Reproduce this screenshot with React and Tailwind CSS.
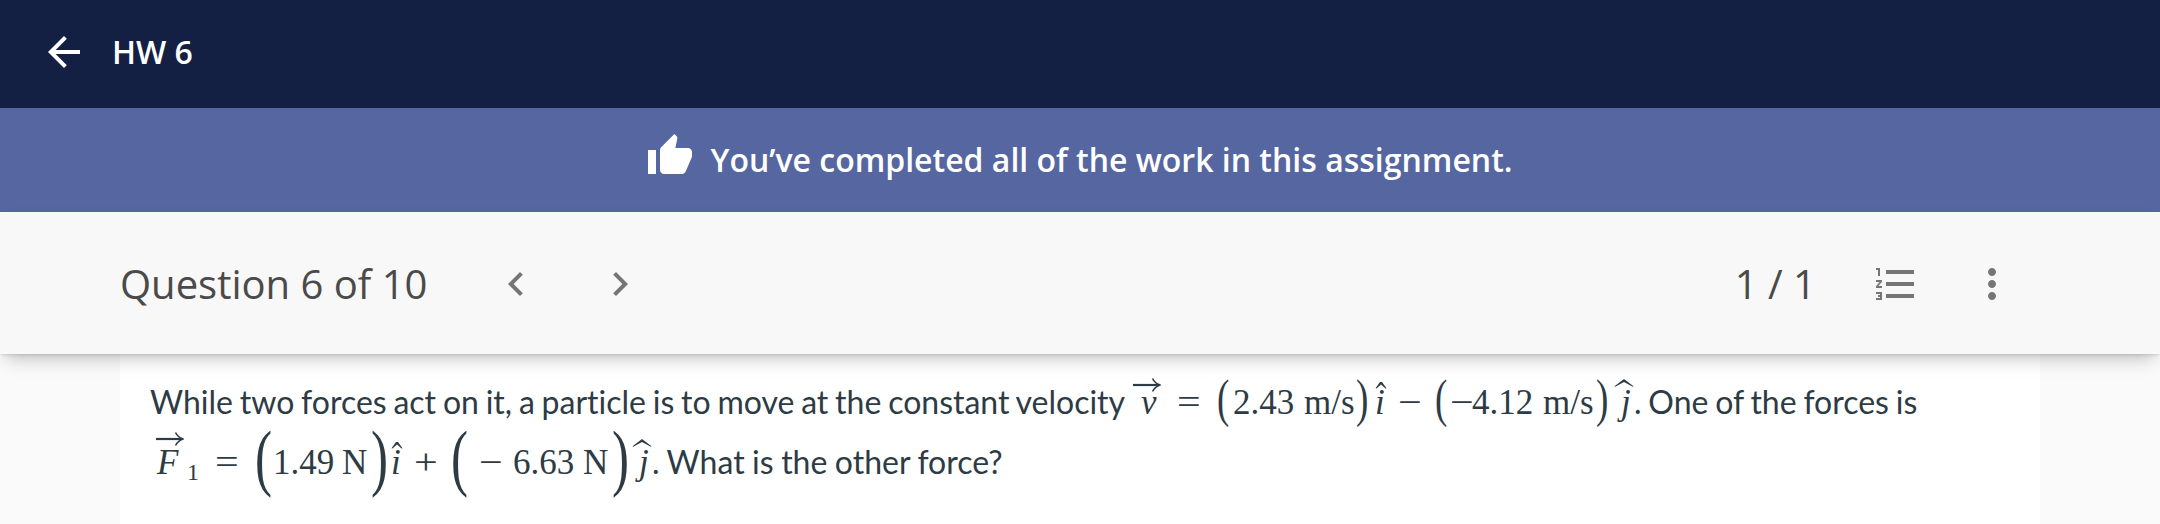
function Icon({ path, className }) {
    return (
        <svg viewBox="0 0 24 24" className={`block h-12 w-12 shrink-0 fill-current ${className || ''}`}>
            <path d={path} />
        </svg>
    );
}

const ICONS = {
    back: 'M20 11H7.83l5.59-5.59L12 4l-8 8 8 8 1.41-1.41L7.83 13H20v-2z',
    thumb: 'M1 21h4V9H1v12zm22-11c0-1.1-.9-2-2-2h-6.31l.95-4.57.03-.32c0-.41-.17-.79-.44-1.06L14.17 1 7.59 7.59C7.22 7.95 7 8.45 7 9v10c0 1.1.9 2 2 2h9c.83 0 1.54-.5 1.84-1.22l3.02-7.05c.09-.23.14-.47.14-.73v-2z',
    prev: 'M15.41 7.41L14 6l-6 6 6 6 1.41-1.41L10.83 12z',
    next: 'M10 6L8.59 7.41 13.17 12l-4.58 4.59L10 18l6-6z',
    list: 'M2 17h2v.5H3v1h1v.5H2v1h3v-4H2v1zm1-9h1V4H2v1h1v3zm-1 3h1.8L2 13.1v.9h3v-1H3.2L5 10.9V10H2v1zm5-6v2h14V5H7zm0 14h14v-2H7v2zm0-6h14v-2H7v2z',
    more: 'M12 8c1.1 0 2-.9 2-2s-.9-2-2-2-2 .9-2 2 .9 2 2 2zm0 2c-1.1 0-2 .9-2 2s.9 2 2 2 2-.9 2-2-.9-2-2-2zm0 6c-1.1 0-2 .9-2 2s.9 2 2 2 2-.9 2-2-.9-2-2-2z',
};

// One token of a formula. The width class carries the space after it.
function M({ className, children }) {
    return (
        <span className={`relative shrink-0 whitespace-pre font-['Liberation_Serif',serif] text-[35px] leading-[60px] ${className}`}>
            {children}
        </span>
    );
}

function Op({ className, children }) {
    return (
        <M className={className}>
            <span className="inline-block origin-[0_50%] scale-x-[1.2]">{children}</span>
        </M>
    );
}

function Fence({ className, big, children }) {
    return (
        <M className={className}>
            <span
                className={
                    big
                        ? 'relative top-[8px] inline-block origin-left scale-x-[0.7] text-[73px] leading-[20px]'
                        : 'relative top-[2px] left-[1px] inline-block origin-left scale-x-[0.7] text-[53px] leading-[20px]'
                }
            >
                {children}
            </span>
        </M>
    );
}

function Vec({ className }) {
    return (
        <svg viewBox="0 0 28 14" className={`absolute h-[14px] w-7 fill-none stroke-current ${className}`}>
            <path d="M0 7h26" strokeWidth="2.2" />
            <path d="M19.5 .5c1.5 3 4 5.500 8 6.500c-4 1-6.500 3.500-8 6.500" strokeWidth="1.6" />
        </svg>
    );
}

function Hat({ wide, className }) {
    return wide ? (
        <svg viewBox="0 0 20 8" className={`absolute h-2 w-5 fill-current ${className}`}>
            <path d="M.5 7.200L10 0l9.500 7.200-.7.600L10 3 1.200 7.800z" />
        </svg>
    ) : (
        <svg viewBox="0 0 12 7" className={`absolute h-[7px] w-3 fill-current ${className}`}>
            <path d="M.5 6.200L5 0h2l4.500 6.200-1 .4L6 2.600 1.500 6.600z" />
        </svg>
    );
}

export default function App() {
    return (
        <div className="flex h-[524px] w-[2160px] flex-col overflow-hidden bg-[#fafafa] font-['Open_Sans',sans-serif]">
            <header className="flex h-[108px] shrink-0 items-center gap-6 bg-[#141f44] pb-1 pl-10 text-white">
                <Icon path={ICONS.back} />
                <h1 className="text-[32px] leading-[44px] font-semibold">HW 6</h1>
            </header>

            <div className="flex h-[104px] shrink-0 items-center justify-center bg-[#5566a0] pr-px text-white">
                <Icon path={ICONS.thumb} className="mr-4 mb-2" />
                <p className="text-[32px] leading-[44px] font-semibold">You’ve completed all of the work in this assignment.</p>
            </div>

            <div className="relative z-10 flex h-[142px] shrink-0 items-center bg-[#f8f8f8] pt-0.5 pr-36 pl-[120px] text-[#757575] shadow-[0_2px_3px_-1px_rgba(0,0,0,0.12),0_9px_18px_-6px_rgba(0,0,0,0.27)]">
                <h2 className="w-[372px] text-[40px] leading-[54px] text-[#4a4a4a]">Question 6 of 10</h2>
                <Icon path={ICONS.prev} />
                <Icon path={ICONS.next} className="ml-14" />
                <span className="ml-auto text-[40px] leading-[54px] text-[#4a4a4a]">1 / 1</span>
                <Icon path={ICONS.list} className="ml-14" />
                <Icon path={ICONS.more} className="ml-12" />
            </div>

            <main className="mx-[120px] flex-1 bg-white pt-[18px] pl-[30px] font-['Lato',sans-serif] text-[32px] leading-[60px] [word-spacing:-1.4px] text-[#2d3b45] [font-variant-ligatures:none]">
                <div className="flex h-[60px] items-baseline whitespace-pre">
                    <span className="w-[983px]">While two forces act on it, a particle is to move at the constant velocity</span>
                    <M className="w-[44px] pl-[8px] italic">
                        v
                        <Vec className="top-[5px] left-0" />
                    </M>
                    <Op className="w-[39px]">=</Op>
                    <Fence className="w-[17px]">(</Fence>
                    <M className="w-[71px]">2.43</M>
                    <M className="w-[51px]">m/s</M>
                    <Fence className="w-[20px]">)</Fence>
                    <M className="w-[23px] italic">
                        i
                        <Hat className="top-[9px] left-0" />
                    </M>
                    <Op className="w-[36px]">−</Op>
                    <Fence className="w-[16px]">(</Fence>
                    <Op className="w-[22px]">−</Op>
                    <M className="w-[71px]">4.12</M>
                    <M className="w-[52px]">m/s</M>
                    <Fence className="w-[23px]">)</Fence>
                    <M className="w-[16px] pl-[3px] italic">
                        j
                        <Hat wide className="top-[6px] left-[-4px]" />
                    </M>
                    <span>. One of the forces is</span>
                </div>
                <div className="flex h-[60px] items-baseline whitespace-pre">
                    <M className="w-[37px] pl-[7px] italic">
                        F
                        <Vec className="top-[-1px] left-[6px]" />
                    </M>
                    <M className="w-[28px]">
                        <span className="relative top-[6px] text-[24px]">1</span>
                    </M>
                    <Op className="w-[40px]">=</Op>
                    <Fence big className="w-[18px]">(</Fence>
                    <M className="w-[69px]">1.49</M>
                    <M className="w-[29px]">N</M>
                    <Fence big className="w-[20px]">)</Fence>
                    <M className="w-[23px] italic">
                        i
                        <Hat className="top-[9px] left-0" />
                    </M>
                    <Op className="w-[37px]">+</Op>
                    <Fence big className="w-[28px]">(</Fence>
                    <Op className="w-[34px]">−</Op>
                    <M className="w-[70px]">6.63</M>
                    <M className="w-[29px]">N</M>
                    <Fence big className="w-[24px]">)</Fence>
                    <M className="w-[16px] pl-[3px] italic">
                        j
                        <Hat wide className="top-[6px] left-[-4px]" />
                    </M>
                    <span className="[word-spacing:-0.7px]">. What is the other force?</span>
                </div>
            </main>
        </div>
    );
}
